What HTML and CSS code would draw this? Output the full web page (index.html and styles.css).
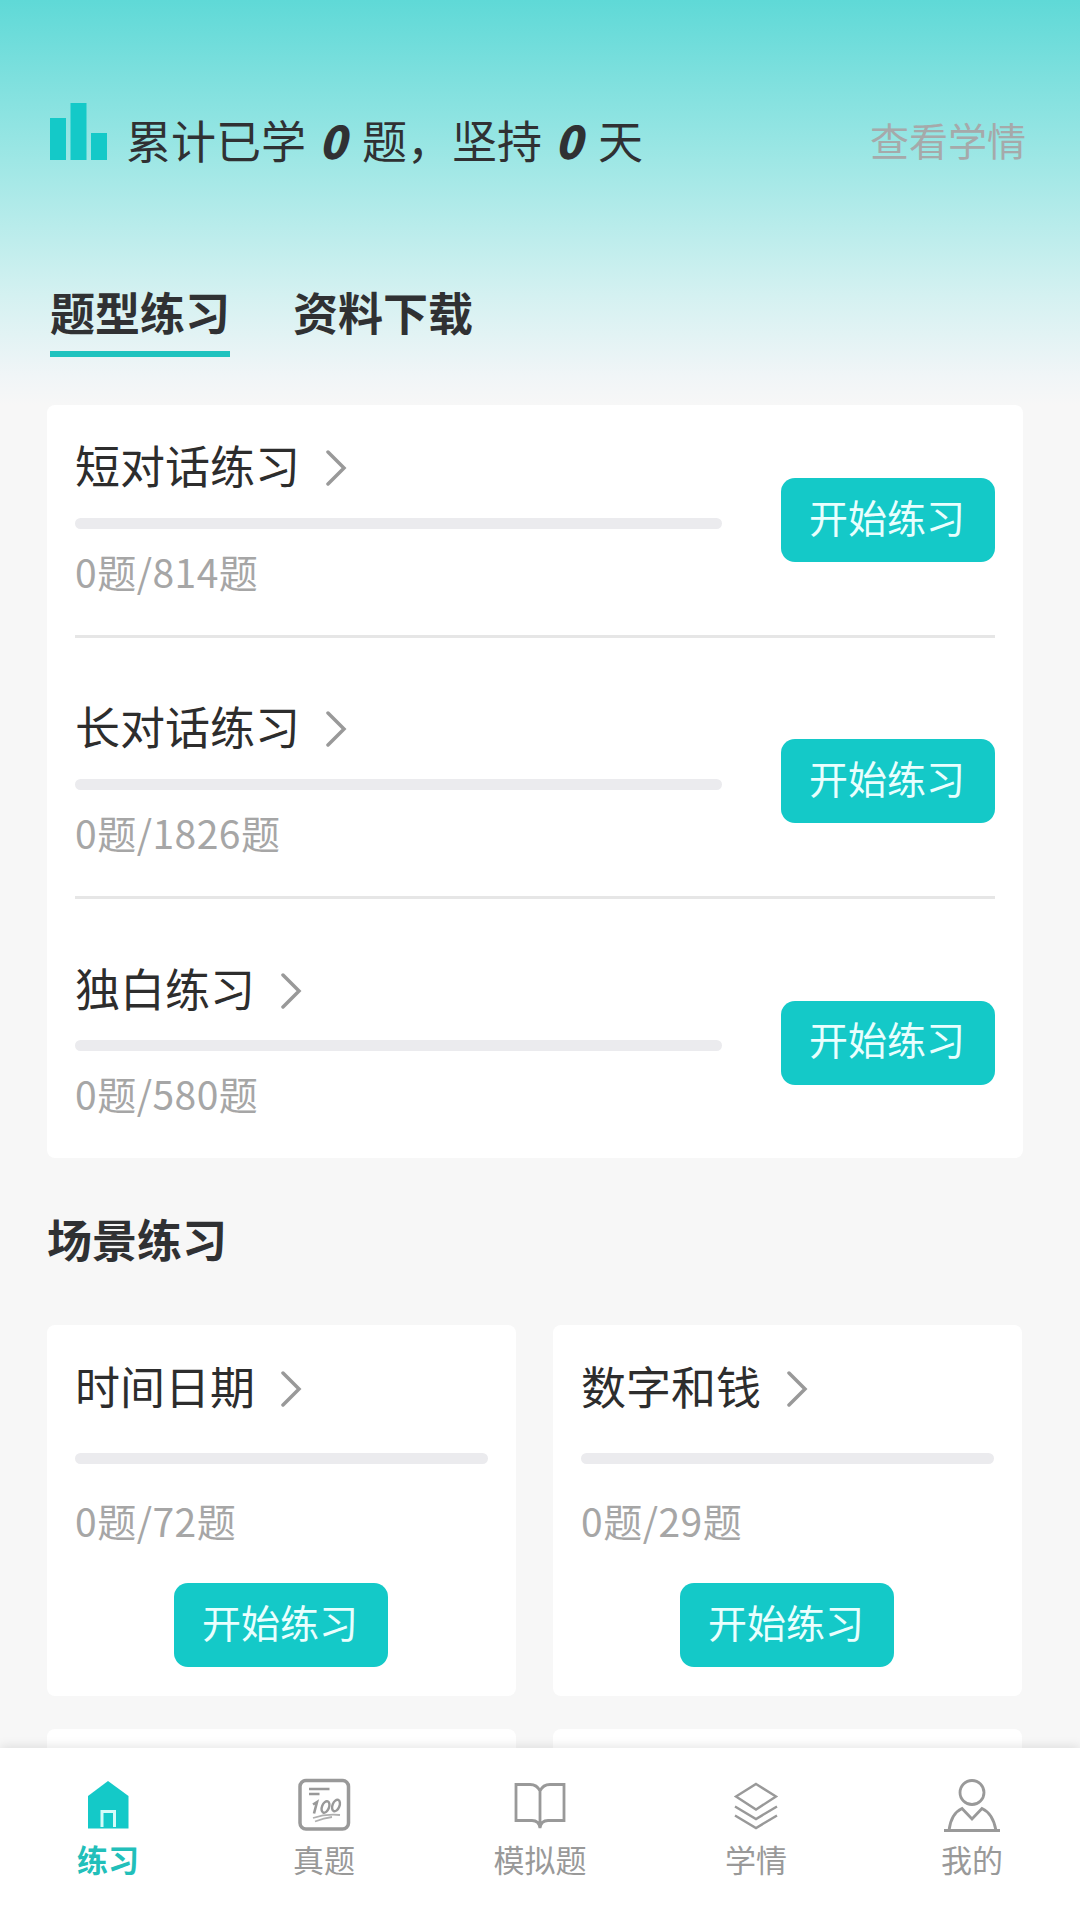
FILE: index.html
```html
<!DOCTYPE html>
<html lang="zh-CN">
<head>
  <meta charset="UTF-8">
  <title>题型练习</title>
  <link rel="stylesheet" href="styles.css">
</head>
<body>
  <main class="page">
    <header class="summary">
      <svg class="logo" width="57" height="57" viewBox="0 0 57 57" fill="#14c9c8">
        <rect x="0" y="15" width="16" height="42"/>
        <rect x="20.5" y="0" width="16" height="57"/>
        <rect x="41" y="30" width="16" height="27"/>
      </svg>
      <p class="summary-text">累计已学<b>0</b>题，坚持<b>0</b>天</p>
      <a class="summary-link">查看学情</a>
    </header>

    <nav class="tabs">
      <a class="tab active">题型练习</a>
      <a class="tab">资料下载</a>
    </nav>

    <section class="card list">
      <div class="item">
        <div class="info">
          <h3 class="title">短对话练习<svg class="arrow" viewBox="0 0 22 36"><path d="M2 2l16 16L2 34"/></svg></h3>
          <div class="bar"></div>
          <p class="count">0题/814题</p>
        </div>
        <button class="start">开始练习</button>
      </div>
      <div class="item">
        <div class="info">
          <h3 class="title">长对话练习<svg class="arrow" viewBox="0 0 22 36"><path d="M2 2l16 16L2 34"/></svg></h3>
          <div class="bar"></div>
          <p class="count">0题/1826题</p>
        </div>
        <button class="start">开始练习</button>
      </div>
      <div class="item">
        <div class="info">
          <h3 class="title">独白练习<svg class="arrow" viewBox="0 0 22 36"><path d="M2 2l16 16L2 34"/></svg></h3>
          <div class="bar"></div>
          <p class="count">0题/580题</p>
        </div>
        <button class="start">开始练习</button>
      </div>
    </section>

    <h2 class="section-title">场景练习</h2>

    <section class="grid">
      <div class="card scene">
        <h3 class="title">时间日期<svg class="arrow" viewBox="0 0 22 36"><path d="M2 2l16 16L2 34"/></svg></h3>
        <div class="bar"></div>
        <p class="count">0题/72题</p>
        <button class="start">开始练习</button>
      </div>
      <div class="card scene">
        <h3 class="title">数字和钱<svg class="arrow" viewBox="0 0 22 36"><path d="M2 2l16 16L2 34"/></svg></h3>
        <div class="bar"></div>
        <p class="count">0题/29题</p>
        <button class="start">开始练习</button>
      </div>
      <div class="card scene"></div>
      <div class="card scene"></div>
    </section>
  </main>

  <footer class="tabbar">
    <a class="tabbar-item active">
      <svg class="icon" viewBox="0 0 60 60">
        <path d="M30 7L50.500 22V54.500H10V22Z" fill="#14c9c8"/>
        <path d="M24 53V37.500H36.500V53" fill="none" stroke="#d5fbf9" stroke-width="3"/>
      </svg>
      练习
    </a>
    <a class="tabbar-item">
      <svg class="icon" viewBox="0 0 60 60">
        <rect x="6" y="6.500" width="48.500" height="48.500" rx="6" stroke-width="3.500"/>
        <path d="M15 15H35.500M15 20H25.500" stroke-width="2.500"/>
        <path d="M19 30.500L23 28L20 39.500" stroke-width="2.600"/>
        <ellipse cx="31.500" cy="33" rx="3.500" ry="6" transform="rotate(22 31.500 33)" stroke-width="2.400"/>
        <ellipse cx="42" cy="31.500" rx="3.500" ry="6" transform="rotate(22 42 31.500)" stroke-width="2.400"/>
        <path d="M19 44Q32 39.500 46 41M21 47.500Q30 44 38 43" stroke="#b0b0b0" stroke-width="1.800"/>
      </svg>
      真题
    </a>
    <a class="tabbar-item">
      <svg class="icon" viewBox="0 0 60 60">
        <path d="M30 17Q27 10.500 20 10.500H6V46.500H22Q29 46.500 30 54Q31 46.500 38 46.500H54V10.500H40Q33 10.500 30 17V52"/>
      </svg>
      模拟题
    </a>
    <a class="tabbar-item">
      <svg class="icon" viewBox="0 0 60 60">
        <path d="M30 10L50 22.500L30 35.500L10 22.500Z" stroke-width="2.400"/>
        <path d="M9 32.500L30 45L51 32.500M9 41.500L30 54L51 41.500" stroke-width="2.400"/>
      </svg>
      学情
    </a>
    <a class="tabbar-item">
      <svg class="icon" viewBox="0 0 60 60">
        <circle cx="30" cy="18.500" r="12"/>
        <path d="M2 56.500H58M7 56.500Q9 39.500 20 34.500L30 45L40 34.500Q51 39.500 54 56.500"/>
      </svg>
      我的
    </a>
  </footer>
</body>
</html>
```
FILE: styles.css
```css
* {
  box-sizing: border-box;
  margin: 0;
  padding: 0;
}
body {
  display: flex;
  flex-direction: column;
  height: 1920px;
  overflow: hidden;
  font-family: "Noto Sans CJK SC", sans-serif;
  color: #303133;
  background: #f7f7f7;
}
.page {
  flex: 1;
  min-height: 0;
  overflow: hidden;
  padding: 103px 57px 0 47px;
  background: linear-gradient(#5fd9d7 0, #9ee7e5 160px, #d4f1f1 295px, #f0f5f7 375px, #f7f7f7 405px);
}
.summary {
  display: flex;
  height: 76px;
  padding-left: 3px;
}
.logo {
  flex: none;
}
.summary-text {
  margin-left: 19px;
  padding-top: 7px;
  font-size: 45px;
  line-height: 60px;
  white-space: nowrap;
}
.summary-text b {
  display: inline-block;
  width: 56px;
  padding-right: 3px;
  font-weight: 900;
  font-style: italic;
  text-align: center;
}
.summary-link {
  margin-left: auto;
  margin-right: -3px;
  padding-top: 6px;
  font-size: 39px;
  line-height: 60px;
  color: #a6a9aa;
}
.tabs {
  display: flex;
  gap: 63px;
  margin-top: 101px;
  padding-left: 3px;
}
.tab {
  height: 77px;
  padding-top: 2px;
  font-size: 45px;
  font-weight: bold;
  line-height: 60px;
}
.tab.active {
  border-bottom: 6px solid #1fc3bf;
}
.card {
  background: #fff;
  border-radius: 8px;
}
.list {
  width: 976px;
  margin-top: 48px;
  padding: 0 28px;
}
.item {
  display: flex;
  justify-content: space-between;
  align-items: center;
  height: 233px;
  border-bottom: 3px solid #e6e6e6;
}
.item + .item {
  margin-top: 28px;
}
.item:last-child {
  height: 231px;
  border-bottom: none;
}
.info {
  width: 647px;
  padding-bottom: 10px;
}
.title {
  display: flex;
  align-items: center;
  height: 60px;
  font-size: 45px;
  font-weight: normal;
  color: #2d2d2d;
}
.arrow {
  width: 22px;
  height: 36px;
  margin: 7px 0 0 26px;
  fill: none;
  stroke: #999;
  stroke-width: 3.500;
  stroke-linecap: round;
}
.bar {
  height: 11px;
  margin-top: 23px;
  border-radius: 6px;
  background: #ebebee;
}
.count {
  margin-top: 17px;
  font-size: 39px;
  line-height: 50px;
  letter-spacing: 0.500px;
  color: #a6a6a6;
}
.start {
  width: 214px;
  height: 84px;
  padding: 0 2px 9px 0;
  border: none;
  border-radius: 14px;
  background: #14c9c8;
  color: #e9fffe;
  font-family: inherit;
  font-size: 39px;
  line-height: 60px;
}
.section-title {
  margin-top: 51px;
  font-size: 45px;
  line-height: 60px;
}
.grid {
  display: grid;
  grid-template-columns: 469px 469px;
  gap: 33px 37px;
  width: 975px;
  margin-top: 56px;
}
.scene {
  height: 371px;
  padding: 30px 28px 0;
}
.scene .bar {
  margin-top: 38px;
}
.scene .count {
  margin-top: 31px;
}
.scene .start {
  display: block;
  margin: 38px auto 0 99px;
}
.tabbar {
  display: flex;
  position: relative;
  height: 172px;
  background: #fff;
  box-shadow: 0 -2px 10px rgba(0, 0, 0, 0.100);
}
.tabbar-item {
  flex: 1;
  padding-top: 26px;
  font-size: 31px;
  line-height: 44px;
  text-align: center;
  color: #999;
}
.tabbar-item.active {
  font-weight: bold;
  color: #22bfba;
}
.icon {
  display: block;
  width: 60px;
  height: 60px;
  margin: 0 auto 3px;
  fill: none;
  stroke: #999;
  stroke-width: 2.800;
}
.active .icon {
  stroke: none;
}
```
